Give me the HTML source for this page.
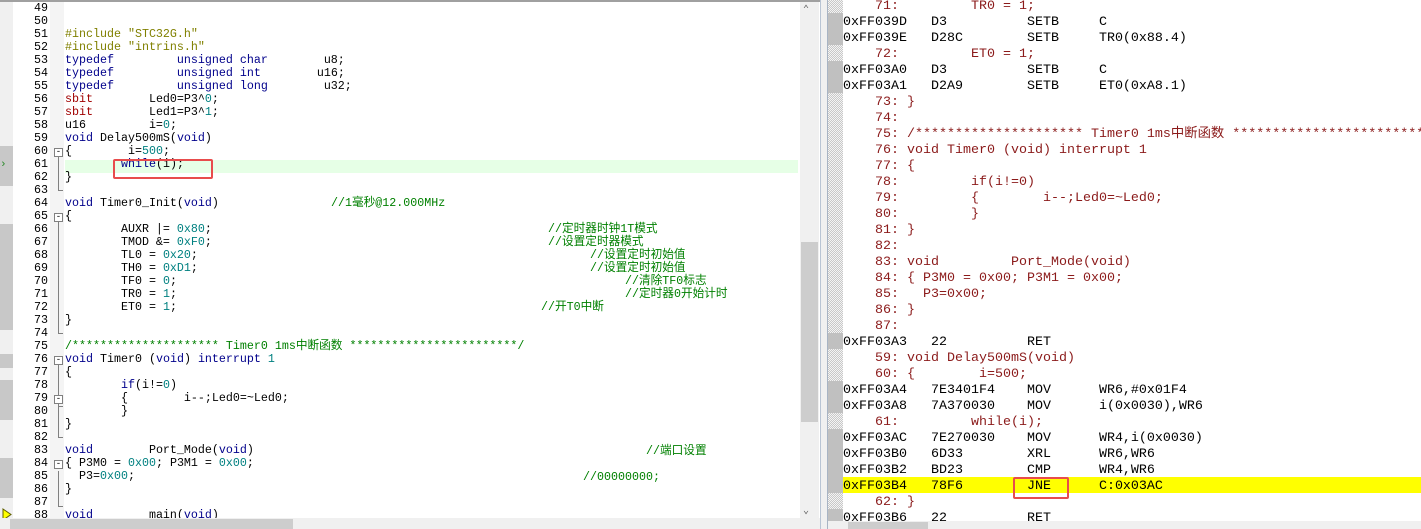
<!DOCTYPE html>
<html><head><meta charset="utf-8">
<style>
*{margin:0;padding:0;box-sizing:border-box}
body{width:1421px;height:529px;overflow:hidden;background:#fff;position:relative;font-family:"Liberation Mono","Noto Sans CJK SC",monospace}
.a{position:absolute;white-space:pre}
#L{position:absolute;left:0;top:0;width:820px;height:529px;background:#fff;overflow:hidden;border-top:2px solid #a0a0a0}
.ln{position:absolute;left:13px;width:35px;text-align:right;font-size:11.67px;line-height:13px;color:#000;white-space:pre}
.c{position:absolute;left:65px;font-size:11.67px;line-height:13px;white-space:pre;color:#000}
.k{color:#00008b}.p{color:#808000}.s{color:#a00000}.n{color:#008080}.g{color:#008000}
.cm{position:absolute;font-size:11.67px;line-height:13px;white-space:pre;color:#008000}
#R{position:absolute;left:828px;top:0;width:593px;height:529px;background:#fff;overflow:hidden}
.r{position:absolute;left:15px;font-size:13.33px;line-height:16px;white-space:pre;color:#000}
.src{color:#8b1a1a}
</style></head><body>
<div id="L">
<div class="a" style="left:0;top:0;width:13px;height:529px;background:#f0f0f0"></div>
<div class="a" style="left:0;top:144px;width:13px;height:40px;background:#c8c8c8"></div>
<div class="a" style="left:0;top:222px;width:13px;height:106px;background:#c8c8c8"></div>
<div class="a" style="left:0;top:352px;width:13px;height:14px;background:#c8c8c8"></div>
<div class="a" style="left:0;top:378px;width:13px;height:40px;background:#c8c8c8"></div>
<div class="a" style="left:0;top:456px;width:13px;height:40px;background:#c8c8c8"></div>
<div class="a" style="left:0;top:157px;font-size:11px;color:#2a8a2a;line-height:13px">›</div>
<svg class="a" style="left:2px;top:506px" width="10" height="13"><polygon points="1,1 9,6.5 1,12" fill="#ffff00" stroke="#606000"/></svg>
<div class="a" style="left:50px;top:0;width:14px;height:529px;background:#f4f4f4"></div>
<div class="a" style="left:65px;top:158px;width:733px;height:13px;background:#e6ffe6"></div>
<div class="a" style="left:113px;top:157px;width:100px;height:20px;border:2.5px solid #e84c4c;border-radius:2px;z-index:3"></div>
<div class="a" style="left:58px;top:152px;width:1px;height:37px;background:#808080"></div><div class="a" style="left:58px;top:188px;width:5px;height:1px;background:#808080"></div>
<div class="a" style="left:58px;top:217px;width:1px;height:115px;background:#808080"></div><div class="a" style="left:58px;top:331px;width:5px;height:1px;background:#808080"></div>
<div class="a" style="left:58px;top:360px;width:1px;height:76px;background:#808080"></div><div class="a" style="left:58px;top:435px;width:5px;height:1px;background:#808080"></div>
<div class="a" style="left:58px;top:469px;width:1px;height:36px;background:#808080"></div><div class="a" style="left:58px;top:504px;width:5px;height:1px;background:#808080"></div>
<div class="a" style="left:58px;top:404px;width:5px;height:1px;background:#808080"></div>
<div class="a" style="left:54px;top:146px;width:9px;height:9px;border:1px solid #808080;background:#fff;font-size:9px;line-height:6px;text-align:center">-</div>
<div class="a" style="left:54px;top:211px;width:9px;height:9px;border:1px solid #808080;background:#fff;font-size:9px;line-height:6px;text-align:center">-</div>
<div class="a" style="left:54px;top:354px;width:9px;height:9px;border:1px solid #808080;background:#fff;font-size:9px;line-height:6px;text-align:center">-</div>
<div class="a" style="left:54px;top:393px;width:9px;height:9px;border:1px solid #808080;background:#fff;font-size:9px;line-height:6px;text-align:center">-</div>
<div class="a" style="left:54px;top:458px;width:9px;height:9px;border:1px solid #808080;background:#fff;font-size:9px;line-height:6px;text-align:center">-</div>

<div class="ln" style="top:0px">49
50
51
52
53
54
55
56
57
58
59
60
61
62
63
64
65
66
67
68
69
70
71
72
73
74
75
76
77
78
79
80
81
82
83
84
85
86
87
88</div>
<div class="c" style="top:0px">

<span class="p">#include "STC32G.h"</span>
<span class="p">#include "intrins.h"</span>
<span class="k">typedef         unsigned char        </span>u8;
<span class="k">typedef         unsigned int        </span>u16;
<span class="k">typedef         unsigned long        </span>u32;
<span class="s">sbit</span>        Led0=P3^<span class="n">0</span>;
<span class="s">sbit</span>        Led1=P3^<span class="n">1</span>;
u16         i=<span class="n">0</span>;
<span class="k">void</span> Delay500mS(<span class="k">void</span>)
{        i=<span class="n">500</span>;
        <span class="k">while</span>(i);
}

<span class="k">void</span> Timer0_Init(<span class="k">void</span>)
{
        AUXR |= <span class="n">0x80</span>;
        TMOD &amp;= <span class="n">0xF0</span>;
        TL0 = <span class="n">0x20</span>;
        TH0 = <span class="n">0xD1</span>;
        TF0 = <span class="n">0</span>;
        TR0 = <span class="n">1</span>;
        ET0 = <span class="n">1</span>;
}

<span class="g">/********************* Timer0 1ms中断函数 ************************/</span>
<span class="k">void</span> Timer0 (<span class="k">void</span>) <span class="k">interrupt</span> <span class="n">1</span>
{
        <span class="k">if</span>(i!=<span class="n">0</span>)
        {        i--;Led0=~Led0;
        }
}

<span class="k">void</span>        Port_Mode(<span class="k">void</span>)
{ P3M0 = <span class="n">0x00</span>; P3M1 = <span class="n">0x00</span>;
  P3=<span class="n">0x00</span>;
}

<span class="k">void</span>        main(<span class="k">void</span>)</div>
<div class="cm" style="left:331px;top:195px">//1毫秒@12.000MHz</div>
<div class="cm" style="left:548px;top:221px">//定时器时钟1T模式</div>
<div class="cm" style="left:548px;top:234px">//设置定时器模式</div>
<div class="cm" style="left:590px;top:247px">//设置定时初始值</div>
<div class="cm" style="left:590px;top:260px">//设置定时初始值</div>
<div class="cm" style="left:625px;top:273px">//清除TF0标志</div>
<div class="cm" style="left:625px;top:286px">//定时器0开始计时</div>
<div class="cm" style="left:541px;top:299px">//开T0中断</div>
<div class="cm" style="left:646px;top:443px">//端口设置</div>
<div class="cm" style="left:583px;top:469px">//00000000;</div>
<div class="a" style="left:800px;top:0;width:19px;height:517px;background:#f0f0f0"></div>
<div class="a" style="left:801px;top:240px;width:17px;height:180px;background:#cdcdcd"></div>
<div class="a" style="left:803px;top:2px;font-size:10px;color:#606060">⌃</div>
<div class="a" style="left:803px;top:503px;font-size:10px;color:#606060">⌄</div>
<div class="a" style="left:0;top:516px;width:820px;height:13px;background:#f0f0f0"></div>
<div class="a" style="left:10px;top:517px;width:283px;height:12px;background:#cdcdcd"></div>
</div>
<div class="a" style="left:820px;top:0;width:8px;height:529px;background:#f0f0f0;border-left:1px solid #b8c4d4;border-right:1px solid #a8b4c4"></div>
<div id="R">
<div class="a" style="left:0;top:0;width:15px;height:529px;background:repeating-conic-gradient(#c8c8c8 0 25%,#f4f4f4 0 50%) 0 0/2px 2px"></div>
<div class="a" style="left:0;top:13px;width:15px;height:32px;background:#c0c0c0"></div>
<div class="a" style="left:0;top:61px;width:15px;height:32px;background:#c0c0c0"></div>
<div class="a" style="left:0;top:333px;width:15px;height:16px;background:#c0c0c0"></div>
<div class="a" style="left:0;top:381px;width:15px;height:32px;background:#c0c0c0"></div>
<div class="a" style="left:0;top:429px;width:15px;height:64px;background:#c0c0c0"></div>
<div class="a" style="left:0;top:509px;width:15px;height:16px;background:#c0c0c0"></div>
<div class="a" style="left:15px;top:477px;width:578px;height:16px;background:#ffff00"></div>
<div class="a" style="left:185px;top:477px;width:56px;height:22px;border:2.5px solid #e84c4c;border-radius:2px;z-index:3"></div>
<div class="r" style="top:-1px"><span class="src">    71:         TR0 = 1;</span>
0xFF039D   D3          SETB     C
0xFF039E   D28C        SETB     TR0(0x88.4)
<span class="src">    72:         ET0 = 1;</span>
0xFF03A0   D3          SETB     C
0xFF03A1   D2A9        SETB     ET0(0xA8.1)
<span class="src">    73: }
    74: 
    75: /********************* Timer0 1ms中断函数 ************************
    76: void Timer0 (void) interrupt 1
    77: {
    78:         if(i!=0)
    79:         {        i--;Led0=~Led0;
    80:         }
    81: }
    82: 
    83: void         Port_Mode(void)
    84: { P3M0 = 0x00; P3M1 = 0x00;
    85:   P3=0x00;
    86: }
    87: </span>
0xFF03A3   22          RET
<span class="src">    59: void Delay500mS(void)
    60: {        i=500;</span>
0xFF03A4   7E3401F4    MOV      WR6,#0x01F4
0xFF03A8   7A370030    MOV      i(0x0030),WR6
<span class="src">    61:         while(i);</span>
0xFF03AC   7E270030    MOV      WR4,i(0x0030)
0xFF03B0   6D33        XRL      WR6,WR6
0xFF03B2   BD23        CMP      WR4,WR6
0xFF03B4   78F6        JNE      C:0x03AC
<span class="src">    62: }</span>
0xFF03B6   22          RET</div>
<div class="a" style="left:0;top:521px;width:593px;height:8px;background:#f0f0f0"></div>
<div class="a" style="left:20px;top:522px;width:80px;height:7px;background:#cdcdcd"></div>
</div>
</body></html>
